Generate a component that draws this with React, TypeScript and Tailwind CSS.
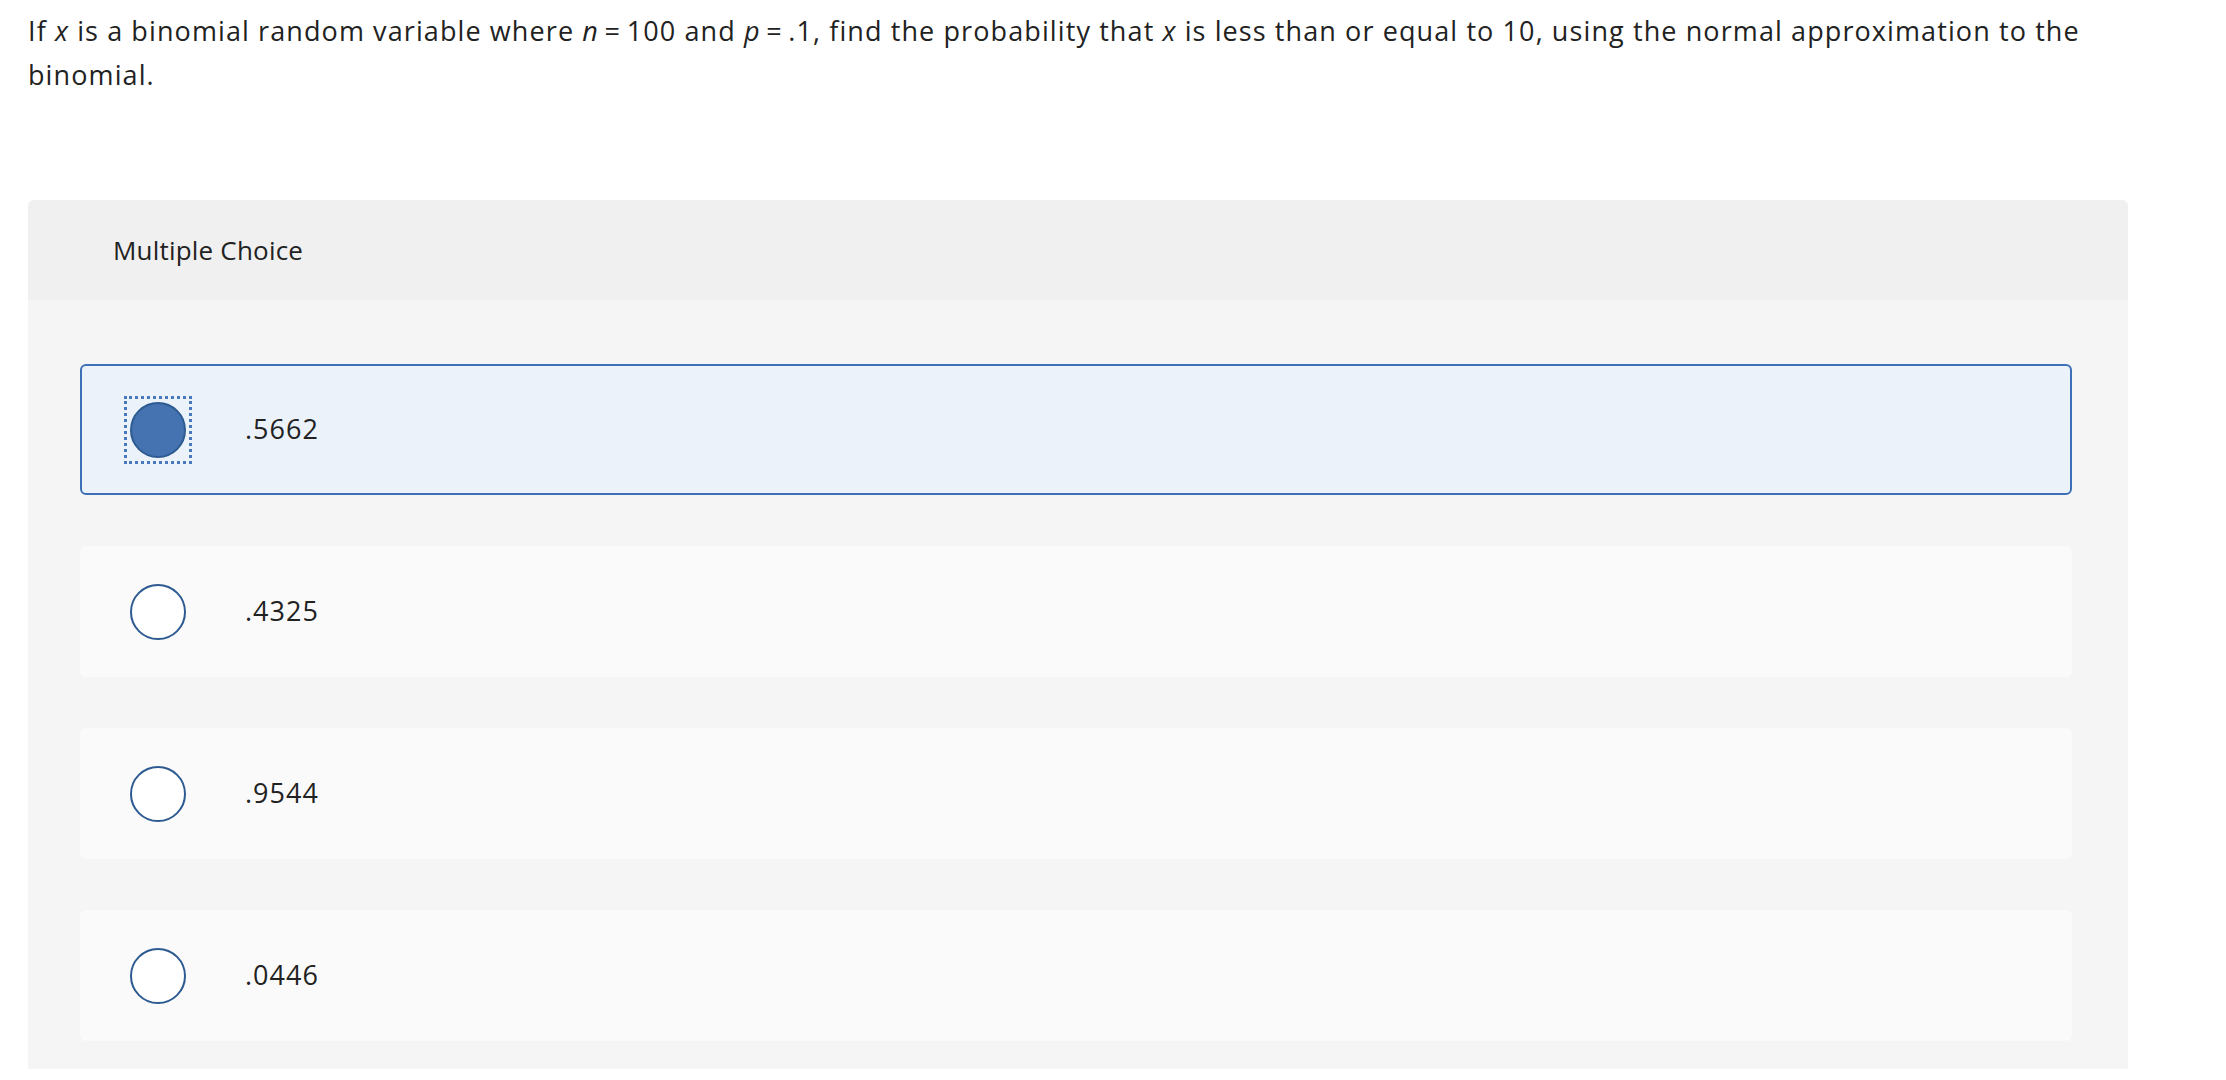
import React from 'react';

const options = ['.5662', '.4325', '.9544', '.0446'];

const Radio = ({ checked }: { checked: boolean }) => {
  if (checked) {
    return (
      <div className="flex h-[68px] w-[68px] items-center justify-center border-[3px] border-dotted border-[#4a78bd]">
        <div className="h-[56px] w-[56px] rounded-full border-2 border-[#2d5a91] bg-[#4573b1]" />
      </div>
    );
  }
  return (
    <div className="flex h-[68px] w-[68px] items-center justify-center">
      <div className="h-[56px] w-[56px] rounded-full border-2 border-[#2d5a91] bg-white" />
    </div>
  );
};

export default function App() {
  return (
    <div className="min-h-screen bg-white font-['Open_Sans',sans-serif] text-[#222]">
      <p className="w-[2128px] pl-[28px] pt-[9px] text-[27px] leading-[44px] tracking-[1.1px]">
        If <i>x</i> is a binomial random variable where <i>n</i>{'\u2009=\u2009'}100 and <i>p</i>{'\u2009=\u2009'}.1, find the
        probability that <i>x</i> is less than or equal to 10, using the normal approximation to the binomial.
      </p>

      <div className="ml-[28px] mt-[103px] w-[2100px] overflow-hidden rounded-t-md bg-[#f5f5f5] pb-[28px]">
        <div className="flex h-[100px] items-center bg-[#f0f0f0] pl-[85px] text-[26px] tracking-[0.2px]">
          Multiple Choice
        </div>
        <div className="flex flex-col gap-[51px] pl-[52px] pr-[56px] pt-[64px]">
          {options.map((opt, i) => (
            <div
              key={opt}
              className={
                i === 0
                  ? 'flex h-[131px] items-center rounded-md border-2 border-[#3d70b6] bg-[#ebf2fa] pl-[42px]'
                  : 'flex h-[131px] items-center rounded-md border-2 border-transparent bg-[#fafafa] pl-[42px]'
              }
            >
              <Radio checked={i === 0} />
              <span className="ml-[53px] text-[27px] tracking-[1px]">{opt}</span>
            </div>
          ))}
        </div>
      </div>
    </div>
  );
}
